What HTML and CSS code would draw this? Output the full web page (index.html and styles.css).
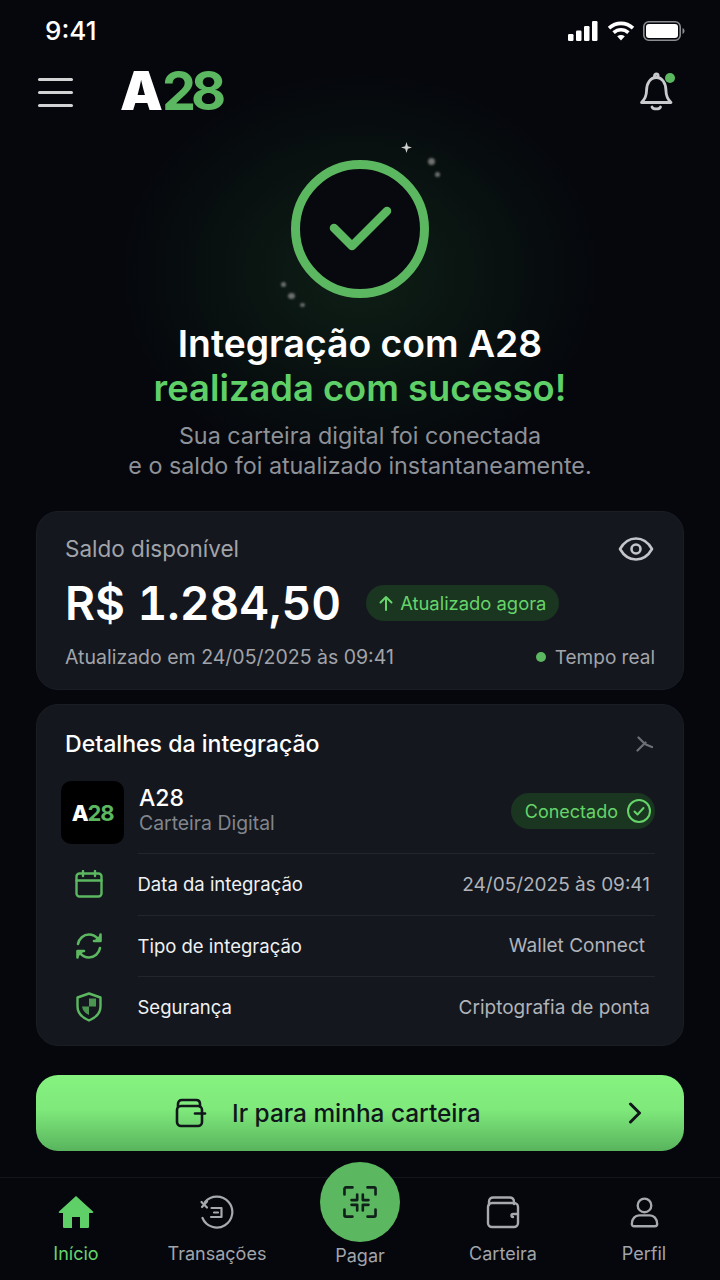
FILE: index.html
```html
<!DOCTYPE html>
<html lang="pt-BR">
<head>
    <title>A28</title>
    <meta charset="utf-8">
    <link rel="stylesheet" href="styles.css">
</head>
<body>
<div class="app">
    <div class="status">
        <span class="time">9:41</span>
        <div class="status-icons">
            <svg width="31" height="20" viewBox="0 0 31 20" fill="#fff"><rect x="0" y="13" width="5.500" height="7" rx="1.200"/><rect x="8" y="9.500" width="5.500" height="10.500" rx="1.200"/><rect x="16" y="5" width="5.500" height="15" rx="1.200"/><rect x="24" y="0" width="5.500" height="20" rx="1.200"/></svg>
            <svg width="28" height="20" viewBox="0 0 28 20" fill="none" stroke="#fff" stroke-width="3.600"><path d="M2 7.200c7-6.400 17-6.400 24 0"/><path d="M6.600 11.600c4.400-3.900 10.400-3.900 14.800 0"/><path d="M14 19.500l-3.800-4.200c2.300-1.700 5.300-1.700 7.600 0z" fill="#fff" stroke="none"/></svg>
            <svg width="42" height="20" viewBox="0 0 42 20" fill="none"><rect x="0.800" y="0.800" width="36.400" height="18.400" rx="5" stroke="#8b8d91" stroke-width="1.600"/><rect x="3" y="3" width="32" height="14" rx="3" fill="#fff"/><path d="M39.500 7v6c1.200-.4 2-1.600 2-3s-.8-2.600-2-3z" fill="#8b8d91"/></svg>
        </div>
    </div>

    <header class="topbar">
        <div class="burger"><i></i><i></i><i></i></div>
        <div class="logo">A<b>28</b></div>
        <div class="bell">
            <svg width="36" height="40" viewBox="0 0 36 40" fill="none" stroke="#c9cacd" stroke-width="2.800" stroke-linecap="round" stroke-linejoin="round"><path d="M16.500 5.500V3.800a1.800 1.800 0 0 1 3.600 0v1.700"/><path d="M8.500 19c0-8 4-13.500 9.800-13.500S28 11 28 19c0 5 1.500 8 5 11.500H3.500C7 27 8.500 24 8.500 19z"/><path d="M14 35c1 2.600 7.500 2.600 8.500 0"/></svg>
            <span class="bell-dot"></span>
        </div>
    </header>

    <section class="hero">
        <div class="glow"></div>
        <svg class="check" width="140" height="140" viewBox="0 0 140 140" fill="none"><circle cx="70" cy="70" r="64.500" fill="#07090f" stroke="#5cb860" stroke-width="9"/><path d="M44 69l18 18 35-35" stroke="#5cb860" stroke-width="8.500" stroke-linecap="round" stroke-linejoin="round"/></svg>
        <span class="spark s1"></span><span class="spark s2"></span><span class="spark s3"></span>
        <span class="spark s4"></span><span class="spark s5"></span><span class="spark s6"></span>
        <h1>Integração com A28<br><em>realizada com sucesso!</em></h1>
        <p>Sua carteira digital foi conectada<br>e o saldo foi atualizado instantaneamente.</p>
    </section>

    <section class="card balance">
        <div class="row">
            <span class="balance-label">Saldo disponível</span>
            <svg class="eye" width="36" height="26" viewBox="0 0 36 26" fill="none" stroke="#c3c5ca" stroke-width="2.600" stroke-linejoin="round"><path d="M2 13C6 6 11.500 2.500 18 2.500S30 6 34 13c-4 7-9.500 10.500-16 10.500S6 20 2 13z"/><circle cx="18" cy="13" r="4.500"/></svg>
        </div>
        <div class="amount-row">
            <span class="amount">R$ 1.284,50</span>
            <span class="pill updated">
                <svg width="14" height="16" viewBox="0 0 14 16" fill="none" stroke="#66d46a" stroke-width="2" stroke-linecap="round" stroke-linejoin="round"><path d="M7 15V2M1.500 7.500L7 2l5.500 5.500"/></svg>
                Atualizado agora
            </span>
        </div>
        <div class="row">
            <span class="balance-foot">Atualizado em 24/05/2025 às 09:41</span>
            <span class="realtime"><i class="dot"></i>Tempo real</span>
        </div>
    </section>

    <section class="card details">
        <div class="row details-head">
            <h2>Detalhes da integração</h2>
            <svg width="18" height="16" viewBox="0 0 18 16" fill="none" stroke="#6d7076" stroke-width="2.200" stroke-linecap="round" stroke-linejoin="round"><path d="M2.500 1.500L9 8c2 1.200 4.500 2 7 3"/><path d="M1.500 14.500L9.500 6.500"/></svg>
        </div>
        <div class="wallet">
            <div class="wallet-logo">A<b>28</b></div>
            <div class="wallet-name">
                <strong>A28</strong>
                <span>Carteira Digital</span>
            </div>
            <span class="pill connected">
                Conectado
                <svg width="26" height="26" viewBox="0 0 26 26" fill="none" stroke="#66d46a" stroke-width="2" stroke-linecap="round" stroke-linejoin="round"><circle cx="13" cy="13" r="11"/><path d="M8.500 13.500l3 3 6-6.500"/></svg>
            </span>
        </div>
        <div class="info">
            <svg class="info-icon" width="28" height="28" viewBox="0 0 28 28" fill="none" stroke="#5cb860" stroke-width="2.400" stroke-linecap="round" stroke-linejoin="round"><rect x="1.500" y="3.500" width="25" height="23" rx="3"/><path d="M1.500 10.500h25M8 1v5M20 1v5"/></svg>
            <span class="info-label">Data da integração</span>
            <span class="info-value">24/05/2025 às 09:41</span>
        </div>
        <div class="info">
            <svg class="info-icon" width="28" height="28" viewBox="0 0 28 28" fill="none" stroke="#5cb860" stroke-width="2.600" stroke-linecap="round" stroke-linejoin="round"><path d="M3 12C4 6.500 8.500 2.500 14 2.500c3.600 0 6.800 1.700 9 4.500"/><path d="M25 16c-1 5.500-5.500 9.500-11 9.500-3.600 0-6.800-1.700-9-4.500"/><path d="M25.500 2.500V9h-6.500" fill="#5cb860"/><path d="M2.500 25.500V19H9" fill="#5cb860"/></svg>
            <span class="info-label">Tipo de integração</span>
            <span class="info-value wc">Wallet Connect</span>
        </div>
        <div class="info">
            <svg class="info-icon" width="28" height="30" viewBox="0 0 28 30" fill="none" stroke="#5cb860" stroke-width="2.400" stroke-linejoin="round"><path d="M14 1.500l11.500 4v9c0 6.500-4.500 11-11.500 14C7 25.500 2.500 21 2.500 14.500v-9z"/><path d="M14 6.500h7v8h-7zM14 14.500H7c.5 4 3 6.800 7 8.500z" fill="#4a9650" stroke="none"/></svg>
            <span class="info-label">Segurança</span>
            <span class="info-value">Criptografia de ponta</span>
        </div>
    </section>

    <a class="cta">
        <svg width="32" height="30" viewBox="0 0 32 30" fill="none" stroke="#10161a" stroke-width="2.600" stroke-linecap="round" stroke-linejoin="round"><path d="M3 8.500V6c0-2.500 1.500-4 4-4h14c2.500 0 4 1.500 4 4v2.500"/><rect x="2" y="8" width="25" height="20" rx="4"/><path d="M20 15.500h10"/></svg>
        <span>Ir para minha carteira</span>
        <svg class="cta-arrow" width="14" height="22" viewBox="0 0 14 22" fill="none" stroke="#10161a" stroke-width="3" stroke-linecap="round" stroke-linejoin="round"><path d="M2.500 2l9 9-9 9"/></svg>
    </a>

    <nav class="tabbar">
        <a class="tab active">
            <svg width="36" height="34" viewBox="0 0 36 34" fill="#5fcf68"><path d="M18 1L1 16.500c-.5.500-.2 1.500.6 1.500H5v13.500c0 1 .7 1.500 1.500 1.500H14V22h8v11h7.500c.8 0 1.500-.5 1.500-1.500V18h3.400c.8 0 1.100-1 .6-1.500z"/></svg>
            Início
        </a>
        <a class="tab">
            <svg width="36" height="34" viewBox="0 0 36 34" fill="none" stroke="#a6a9ae" stroke-width="2.200" stroke-linecap="round" stroke-linejoin="round"><path d="M6 7A15.500 15.500 0 1 1 3.500 23"/><path d="M2.500 7L8 12.500M8 6.500L3 12"/><path d="M12.500 13h10v9h-10.500M15 17.500h4"/></svg>
            Transações
        </a>
        <a class="tab pay">
            <span class="pay-btn">
                <svg width="34" height="32" viewBox="0 0 36 34" fill="none" stroke="#10201a" stroke-width="2.800" stroke-linecap="round" stroke-linejoin="round"><path d="M1.500 9V3a1.500 1.500 0 0 1 1.500-1.500h7M26 1.500h7A1.500 1.500 0 0 1 34.500 3v6M1.500 25v6A1.500 1.500 0 0 0 3 32.500h7M26 32.500h7a1.500 1.500 0 0 0 1.500-1.500v-6"/><path d="M9 15h6V9M21 9v6h6M9 20h6v6M27 20h-6v6"/></svg>
            </span>
            Pagar
        </a>
        <a class="tab">
            <svg width="34" height="34" viewBox="0 0 34 34" fill="none" stroke="#a6a9ae" stroke-width="2.400" stroke-linecap="round" stroke-linejoin="round"><path d="M3 10V7c0-3 1.500-4.500 4.500-4.500h16C26.500 2.500 28 4 28 7v2"/><rect x="2" y="8" width="30" height="24" rx="4"/><path d="M32 19h-5c-2 0-2 3 0 3"/></svg>
            Carteira
        </a>
        <a class="tab">
            <svg width="29" height="34" viewBox="0 -2 32 37.500" fill="none" stroke="#a6a9ae" stroke-width="2.600" stroke-linejoin="round"><circle cx="16" cy="9.500" r="7.500"/><path d="M2 30c0-6 4-9.500 8-9.500h12c4 0 8 3.500 8 9.500 0 1.500-1 2.500-2.500 2.500h-23C3 32.500 2 31.500 2 30z"/></svg>
            Perfil
        </a>
    </nav>
</div>
</body>
</html>
```

FILE: styles.css
```css
* {
    box-sizing: border-box;
}
html, body {
    margin: 0;
    padding: 0;
}
body {
    background: #05070c;
    font-family: "Inter", "Liberation Sans", sans-serif;
    color: #fff;
}
.app {
    width: 720px;
    height: 1280px;
    display: flex;
    flex-direction: column;
    overflow: hidden;
}
.row {
    display: flex;
    justify-content: space-between;
    align-items: center;
}

/* status bar */
.status {
    height: 62px;
    padding: 18px 35px 0 45px;
    display: flex;
    justify-content: space-between;
    align-items: flex-start;
}
.time {
    font-size: 26px;
    font-weight: 500;
    line-height: 26px;
}
.status-icons {
    display: flex;
    gap: 8px;
    align-items: center;
    padding-top: 3px;
}

/* top bar */
.topbar {
    height: 60px;
    padding: 0 46px 0 38px;
    display: flex;
    align-items: center;
}
.burger {
    width: 35px;
    display: flex;
    flex-direction: column;
    gap: 10px;
}
.burger i {
    height: 3px;
    border-radius: 2px;
    background: #d2d3d5;
}
.logo {
    margin-left: 47px;
    font-size: 54px;
    font-weight: 900;
    line-height: 58px;
    padding-bottom: 2px;
    flex: 1;
}
.logo b {
    color: #5cb860;
    font-weight: 700;
    letter-spacing: -5px;
    margin-left: -1px;
}
.wallet-logo b {
    color: #5cb860;
    font-weight: 700;
}
.bell {
    position: relative;
    width: 36px;
    height: 40px;
}
.bell-dot {
    position: absolute;
    top: 1px;
    right: -1px;
    width: 10px;
    height: 10px;
    border-radius: 50%;
    background: #5cb860;
}

/* hero */
.hero {
    position: relative;
    height: 389px;
    text-align: center;
    padding-top: 37px;
}
.glow {
    position: absolute;
    left: 120px;
    top: -50px;
    width: 480px;
    height: 400px;
    background: radial-gradient(closest-side, rgba(60, 150, 70, 0.17), rgba(60, 150, 70, 0) 100%);
}
.check {
    position: relative;
    display: block;
    margin: 0 auto;
}
.spark {
    position: absolute;
    width: 5px;
    height: 5px;
    border-radius: 50%;
    background: #6f7270;
    filter: blur(0.8px);
}
.s1 {
    left: 401px;
    top: 20px;
    width: 11px;
    height: 11px;
    border-radius: 0;
    background: #d0d2d0;
    filter: none;
    clip-path: polygon(50% 0, 62% 38%, 100% 50%, 62% 62%, 50% 100%, 38% 62%, 0 50%, 38% 38%);
}
.s2 { left: 428px; top: 36px; width: 7px; height: 7px; }
.s3 { left: 435px; top: 50px; }
.s4 { left: 281px; top: 160px; }
.s5 { left: 288px; top: 171px; width: 7px; height: 6px; }
.s6 { left: 300px; top: 181px; width: 5px; height: 4px; }
.hero h1 {
    position: relative;
    margin: 23px 0 0;
    font-size: 37.300px;
    font-weight: 600;
    line-height: 44px;
}
.hero h1 em {
    font-style: normal;
    color: #5fcf68;
    font-size: 36.300px;
}
.hero p {
    position: relative;
    margin: 11px 0 0;
    font-size: 23.300px;
    line-height: 30px;
    color: #8e9197;
}

/* cards */
.card {
    margin: 0 36px;
    background: #14171e;
    border: 1px solid #1a1d24;
    border-radius: 22px;
}
.balance {
    height: 179px;
    padding: 23px 28px 0 28px;
}
.eye {
    margin-right: 1px;
}
.balance-label {
    font-size: 22.500px;
    color: #a1a4aa;
}
.amount-row {
    display: flex;
    align-items: center;
    gap: 25px;
    margin-top: 12px;
}
.amount {
    font-size: 46.100px;
    font-weight: 600;
    line-height: 58px;
    font-variant-numeric: tabular-nums;
}
.pill {
    display: inline-flex;
    align-items: center;
    background: #1a3520;
    color: #66d46a;
    border-radius: 18px;
    height: 36px;
    font-size: 18.400px;
}
.updated {
    gap: 7px;
    padding: 0 13px 0 13px;
}
.amount-row + .row {
    margin-top: 13px;
}
.balance-foot {
    font-size: 19.500px;
    color: #a1a4aa;
}
.realtime {
    display: flex;
    align-items: center;
    gap: 9px;
    font-size: 19px;
    color: #a1a4aa;
}
.dot {
    width: 10px;
    height: 10px;
    border-radius: 50%;
    background: #5cb860;
}

.details {
    margin-top: 14px;
    height: 342px;
    padding: 24px 28px 0 24px;
}
.details-head {
    padding: 0 1px 0 4px;
}
.details h2 {
    margin: 0;
    font-size: 23.100px;
    font-weight: 500;
    line-height: 30px;
}
.wallet {
    display: flex;
    align-items: center;
    margin-top: 22px;
}
.wallet-logo {
    width: 63px;
    height: 63px;
    border-radius: 10px;
    background: #000;
    display: flex;
    align-items: center;
    justify-content: center;
    font-size: 22px;
    font-weight: 800;
    letter-spacing: -1.200px;
}
.wallet-name {
    flex: 1;
    margin-left: 15px;
    padding-bottom: 5px;
    display: flex;
    flex-direction: column;
}
.wallet-name strong {
    font-size: 23px;
    font-weight: 500;
    line-height: 26px;
}
.wallet-name span {
    font-size: 19.400px;
    line-height: 24px;
    color: #82858c;
}
.connected {
    gap: 8px;
    padding: 0 3px 0 14px;
    margin-bottom: 3px;
    background: #1a3520;
    font-size: 18px;
}
.info {
    display: flex;
    align-items: center;
    height: 61.500px;
    margin-left: 77px;
    position: relative;
    border-top: 1px solid #22252c;
    padding-right: 5px;
}
.wallet + .info {
    margin-top: 9px;
}
.info-icon {
    position: absolute;
    left: -63px;
    top: 50%;
    transform: translateY(-50%);
}
.info-label {
    flex: 1;
    color: #f0f1f2;
    font-size: 18.500px;
    margin-left: -0.500px;
}
.info-value {
    color: #b0b3b9;
    font-size: 19px;
}
.wc {
    padding-right: 5px;
}

/* button */
.cta {
    margin: 29px 36px 0;
    height: 76px;
    border-radius: 22px;
    background: linear-gradient(180deg, #85f27f 0%, #7fe97b 45%, #58b45d 100%);
    display: flex;
    align-items: center;
    padding-left: 139px;
    color: #10161a;
    font-size: 24.400px;
    font-weight: 500;
}
.cta span {
    margin-left: 25px;
    flex: 1;
}
.cta-arrow {
    margin-right: 42px;
}

/* tab bar */
.tabbar {
    margin-top: 26px;
    flex: 1;
    border-top: 1px solid #12151a;
    display: grid;
    grid-template-columns: 152px 130px 156px 130px 152px;
    padding-top: 17px;
}
.tab {
    display: flex;
    flex-direction: column;
    align-items: center;
    gap: 15px;
    font-size: 18px;
    line-height: 20px;
    color: #a1a4aa;
}
.tab.active {
    color: #66d46a;
}
.pay {
    margin-top: -33px;
    gap: 4px;
}
.pay-btn {
    width: 80px;
    height: 80px;
    border-radius: 50%;
    background: #5cb860;
    display: flex;
    align-items: center;
    justify-content: center;
}
```
